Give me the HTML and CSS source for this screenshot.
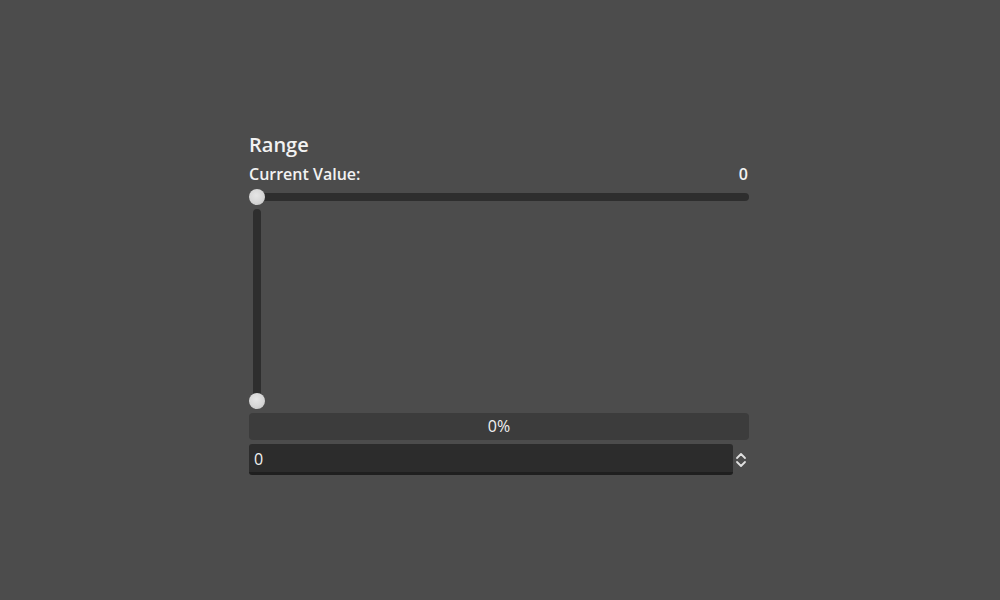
FILE: index.html
```html
<!DOCTYPE html>
<html>
<head>
<meta charset="utf-8">
<link rel="stylesheet" href="styles.css">
</head>
<body>
<div class="panel">
  <div class="title">Range</div>
  <div class="value-row"><span>Current Value:</span><span>0</span></div>
  <div class="hslider">
    <div class="htrack"></div>
    <div class="grabber hgrab"></div>
  </div>
  <div class="vslider">
    <div class="vtrack"></div>
    <div class="grabber vgrab"></div>
  </div>
  <div class="progress">0%</div>
  <div class="spinbox">
    <div class="field">0</div>
    <div class="arrows">
      <svg width="12" height="16" viewBox="0 0 12 16">
        <path d="M2 6 L6 2 L10 6" fill="none" stroke="#e0e0e0" stroke-width="1.8" stroke-linecap="round" stroke-linejoin="round"/>
        <path d="M2 10 L6 14 L10 10" fill="none" stroke="#e0e0e0" stroke-width="1.8" stroke-linecap="round" stroke-linejoin="round"/>
      </svg>
    </div>
  </div>
</div>
</body>
</html>
```
FILE: styles.css
```css
html, body {
  margin: 0;
  padding: 0;
  background: #4c4c4c;
  width: 1000px;
  height: 600px;
  overflow: hidden;
  font-family: "Open Sans", "Noto Sans", sans-serif;
  color: #f2f2f2;
}
.panel {
  margin: 131px 0 0 249px;
  width: 500px;
  display: flex;
  flex-direction: column;
  gap: 4px;
}
.title {
  font-size: 20px;
  line-height: 28px;
  font-weight: 600;
}
.value-row {
  display: flex;
  justify-content: space-between;
  font-size: 16px;
  line-height: 22px;
  font-weight: 600;
  padding-right: 1px;
}
.hslider {
  position: relative;
  height: 16px;
  display: flex;
  align-items: center;
}
.htrack {
  width: 100%;
  height: 8px;
  border-radius: 4px;
  background: #2e2e2e;
}
.grabber {
  position: absolute;
  width: 16px;
  height: 16px;
  border-radius: 50%;
  background: radial-gradient(circle at 45% 40%, #e6e6e6 0%, #d6d6d6 55%, #bdbdbd 100%);
}
.hgrab {
  left: 0;
  top: 0;
}
.vslider {
  position: relative;
  width: 16px;
  height: 200px;
  display: flex;
  justify-content: center;
}
.vtrack {
  width: 8px;
  height: 196px;
  border-radius: 4px;
  background: #2e2e2e;
}
.vgrab {
  left: 0;
  bottom: 0;
}
.progress {
  height: 27px;
  border-radius: 4px;
  background: #3c3c3c;
  font-size: 16px;
  font-weight: 400;
  line-height: 27px;
  text-align: center;
  color: #f0f0f0;
}
.spinbox {
  display: flex;
  height: 31px;
}
.field {
  width: 484px;
  box-sizing: border-box;
  height: 31px;
  background: #2c2c2c;
  border-bottom: 3px solid #1f1f1f;
  border-radius: 3px;
  font-size: 16px;
  font-weight: 400;
  line-height: 30px;
  padding-left: 5px;
  color: #f0f0f0;
}
.arrows {
  width: 16px;
  display: flex;
  align-items: center;
  justify-content: center;
}
.arrows svg {
  display: block;
}
```
